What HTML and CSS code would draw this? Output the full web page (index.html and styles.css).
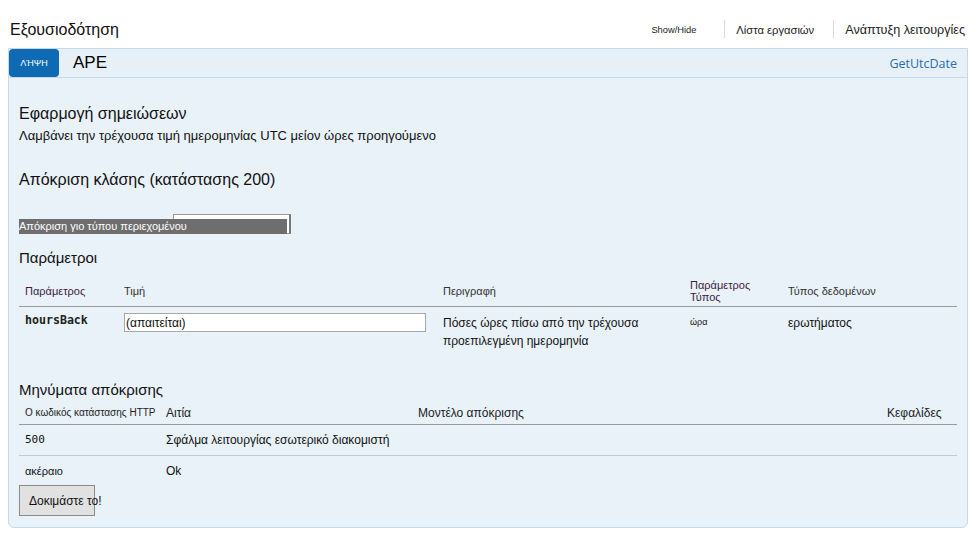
FILE: index.html
```html
<!DOCTYPE html>
<html lang="el">
<head>
<meta charset="utf-8">
<title>Εξουσιοδότηση</title>
<link rel="stylesheet" href="styles.css">
</head>
<body>
<div class="page">
  <header class="top">
    <h1 class="title">Εξουσιοδότηση</h1>
    <ul class="nav">
      <li class="nav-item nav-small">Show/Hide</li>
      <li class="nav-item nav-sep nav-mid">Λίστα εργασιών</li>
      <li class="nav-item nav-sep nav-big">Ανάπτυξη λειτουργίες</li>
    </ul>
  </header>

  <section class="op">
    <div class="op-head">
      <span class="verb">ΛΉΨΗ</span>
      <span class="path">APE</span>
      <a class="nick">GetUtcDate</a>
    </div>
    <div class="op-body">
      <h4 class="h-impl">Εφαρμογή σημειώσεων</h4>
      <p class="summary">Λαμβάνει την τρέχουσα τιμή ημερομηνίας UTC μείον ώρες προηγούμενο</p>
      <h4 class="h-resp">Απόκριση κλάσης (κατάστασης 200)</h4>
      <div class="ctype">
        <div class="ctype-select"></div>
        <div class="ctype-label">Απόκριση γιο τύπου περιεχομένου</div>
      </div>
      <h4 class="h-params">Παράμετροι</h4>
      <table class="ptable">
        <colgroup>
          <col class="pc1"><col class="pc2"><col class="pc3"><col class="pc4"><col class="pc5">
        </colgroup>
        <thead>
          <tr>
            <th class="purple">Παράμετρος</th>
            <th>Τιμή</th>
            <th>Περιγραφή</th>
            <th class="purple">Παράμετρος<br>Τύπος</th>
            <th>Τύπος δεδομένων</th>
          </tr>
        </thead>
        <tbody>
          <tr>
            <td class="code">hoursBack</td>
            <td><div class="input">(απαιτείται)</div></td>
            <td class="desc">Πόσες ώρες πίσω από την τρέχουσα προεπιλεγμένη ημερομηνία</td>
            <td class="tiny">ώρα</td>
            <td class="dtype">ερωτήματος</td>
          </tr>
        </tbody>
      </table>
      <h4 class="h-msgs">Μηνύματα απόκρισης</h4>
      <table class="rtable">
        <colgroup>
          <col class="rc1"><col class="rc2"><col class="rc3"><col class="rc4">
        </colgroup>
        <thead>
          <tr>
            <th class="small">Ο κωδικός κατάστασης HTTP</th>
            <th>Αιτία</th>
            <th>Μοντέλο απόκρισης</th>
            <th>Κεφαλίδες</th>
          </tr>
        </thead>
        <tbody>
          <tr class="r-line">
            <td class="mono">500</td>
            <td>Σφάλμα λειτουργίας εσωτερικό διακομιστή</td>
            <td></td>
            <td></td>
          </tr>
          <tr class="r-last">
            <td class="small">ακέραιο</td>
            <td>Ok</td>
            <td></td>
            <td></td>
          </tr>
        </tbody>
      </table>
      <button class="try" type="button">Δοκιμάστε το!</button>
    </div>
  </section>
</div>
</body>
</html>
```

FILE: styles.css
```css
html, body {
  margin: 0;
  padding: 0;
  background: #ffffff;
}
body {
  font-family: "Liberation Sans", Arial, sans-serif;
  color: #1a1a1a;
}
.page {
  padding: 0 11px 0 8px;
}
.top {
  height: 48px;
  display: flex;
  align-items: flex-end;
  justify-content: space-between;
  box-sizing: border-box;
  padding-bottom: 8px;
}
.title {
  margin: 0;
  padding-left: 2px;
  font-size: 16px;
  line-height: 20px;
  font-weight: normal;
  color: #111;
}
.nav {
  list-style: none;
  margin: 0 3px 2px 0;
  padding: 0;
  display: flex;
  align-items: center;
}
.nav-item {
  font-size: 12px;
  line-height: 16px;
  padding-top: 2px;
  padding-bottom: 0;
  color: #222;
}
.nav-small {
  font-size: 9.3px;
  padding-right: 28px;
}
.nav-sep {
  border-left: 1px solid #dcdcdc;
  padding-left: 11px;
}
.nav-mid {
  font-size: 11.2px;
  padding-right: 0;
}
.nav-sep + .nav-sep {
  margin-left: 19px;
}
.nav-big {
  font-size: 12.6px;
}

.op {
  border: 1px solid #c3d9ec;
  border-radius: 0 0 6px 6px;
  background: #e9f1f9;
}
.op-head {
  height: 28px;
  display: flex;
  align-items: center;
  border-bottom: 1px solid #c3d9ec;
  background: #e7eff7;
  padding-right: 10px;
}
.verb {
  width: 50px;
  height: 28px;
  background: #0f6ab4;
  color: #fff;
  border-radius: 4px;
  font-size: 9px;
  line-height: 28px;
  text-align: center;
}
.path {
  margin-left: 14px;
  font-size: 17px;
  line-height: 28px;
  color: #000;
}
.nick {
  margin-left: auto;
  font-family: "Open Sans", "Noto Sans", sans-serif;
  font-size: 12.5px;
  color: #2a6db5;
}
.op-body {
  padding: 26px 10px 11px 10px;
}
.op-body h4 {
  margin: 0;
  font-weight: normal;
  color: #111;
}
.h-impl {
  font-size: 16px;
  line-height: 20px;
}
.summary {
  margin: 4px 0 0 0;
  font-size: 13px;
  line-height: 16px;
  color: #111;
}
.h-resp {
  margin-top: 26px !important;
  font-size: 16px;
  line-height: 20px;
}
.ctype {
  position: relative;
  margin-top: 24px;
  width: 272px;
  height: 20px;
}
.ctype-select {
  position: absolute;
  left: 154px;
  top: 0;
  width: 115px;
  height: 18px;
  background: #fff;
  border: 1px solid #999;
  border-right: 2px solid #777;
}
.ctype-label {
  position: absolute;
  left: 0;
  top: 5px;
  width: 268px;
  height: 15px;
  background: #6e6e6e;
  color: #fff;
  font-size: 11px;
  line-height: 15px;
}
.h-params {
  margin-top: 15px !important;
  font-size: 15px;
  line-height: 18px;
}

table {
  border-collapse: collapse;
  table-layout: fixed;
  width: 938px;
}
th, td {
  padding: 0 6px;
  text-align: left;
  font-weight: normal;
}
.ptable {
  margin-top: 9px;
}
.pc1 { width: 99px; }
.pc2 { width: 319px; }
.pc3 { width: 247px; }
.pc4 { width: 98px; }
.pc5 { width: 175px; }
.ptable thead tr {
  height: 30px;
  border-bottom: 1px solid #9a9a9a;
}
.ptable th {
  font-size: 11px;
  line-height: 12px;
  color: #333;
  vertical-align: middle;
}
.ptable th.purple {
  color: #3d1c3f;
}
.ptable td {
  vertical-align: top;
  padding-top: 6px;
  padding-bottom: 6px;
  font-size: 12px;
  line-height: 18px;
  color: #111;
}
.ptable td.code {
  font-family: "DejaVu Sans Mono", monospace;
  font-weight: bold;
  font-size: 11.6px;
  line-height: 17px;
  padding-top: 5px;
  color: #222;
}
.input {
  width: 299px;
  height: 17px;
  box-sizing: content-box;
  background: #fff;
  border: 1px solid #a9a9a9;
  font-size: 12px;
  line-height: 18px;
  padding-left: 1px;
  color: #111;
}
.ptable td.desc {
  padding-top: 7px;
}
.ptable td.tiny {
  font-size: 9px;
  padding-top: 6px;
}
.ptable td.dtype {
  padding-top: 7px;
}

.h-msgs {
  margin-top: 25px !important;
  font-size: 15px;
  line-height: 18px;
}
.rtable {
  margin-top: 2px;
}
.rc1 { width: 141px; }
.rc2 { width: 252px; }
.rc3 { width: 469px; }
.rc4 { width: 76px; }
.rtable thead tr {
  height: 24px;
  border-bottom: 1px solid #9a9a9a;
}
.rtable th {
  font-size: 12px;
  line-height: 14px;
  color: #222;
  vertical-align: bottom;
  padding-bottom: 4px;
}
.rtable th.small {
  font-size: 10px;
  padding-right: 0;
  white-space: nowrap;
}
.rtable td {
  font-size: 12px;
  line-height: 16px;
  color: #111;
  vertical-align: top;
}
.r-line td {
  padding-top: 7px;
  padding-bottom: 7px;
}
.r-line {
  border-bottom: 1px solid #c8c8c8;
}
.r-last td {
  padding-top: 7px;
  padding-bottom: 3px;
}
.rtable td.mono {
  font-family: "DejaVu Sans Mono", monospace;
  font-size: 11px;
}
.rtable td.small {
  font-size: 11px;
}
.try {
  display: block;
  margin-top: 3px;
  width: 76px;
  height: 31px;
  padding: 0 0 0 9px;
  text-align: left;
  white-space: nowrap;
  overflow: visible;
  background: #e1e1e1;
  border: 1px solid #8a8a8a;
  border-radius: 0;
  font-family: "Liberation Sans", Arial, sans-serif;
  font-size: 12px;
  color: #111;
}
```
